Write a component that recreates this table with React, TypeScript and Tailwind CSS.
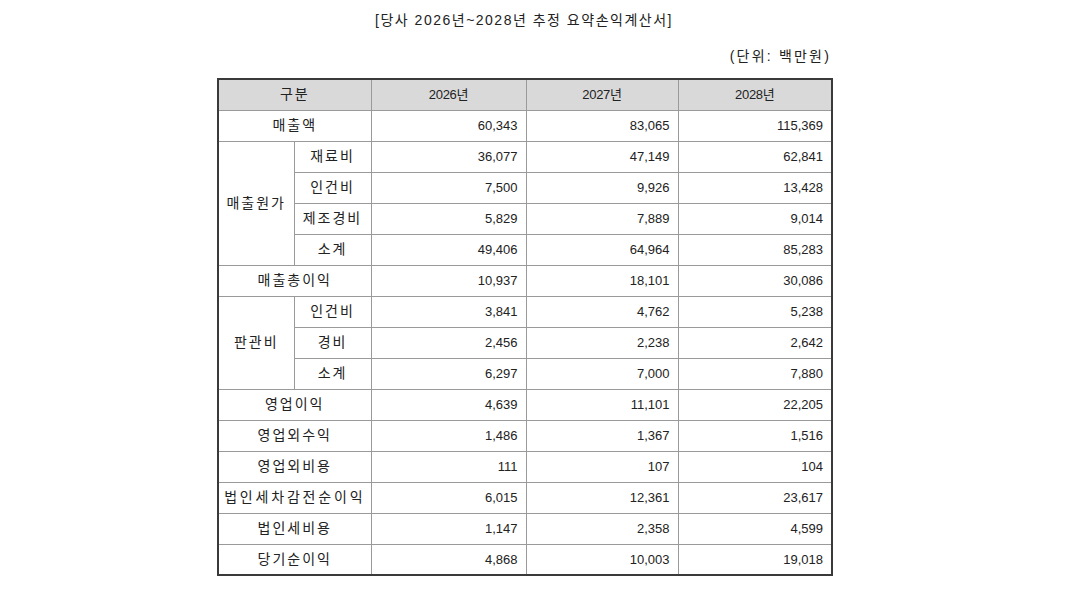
const font = { fontFamily: '"Liberation Sans", "Noto Sans CJK KR", sans-serif' };

type Row = { label: string; values: string[]; group?: string; span?: number; sub?: boolean };

const rows: Row[] = [
  { label: "매출액", values: ["60,343", "83,065", "115,369"] },
  { group: "매출원가", span: 4, label: "재료비", values: ["36,077", "47,149", "62,841"], sub: true },
  { label: "인건비", values: ["7,500", "9,926", "13,428"], sub: true },
  { label: "제조경비", values: ["5,829", "7,889", "9,014"], sub: true },
  { label: "소계", values: ["49,406", "64,964", "85,283"], sub: true },
  { label: "매출총이익", values: ["10,937", "18,101", "30,086"] },
  { group: "판관비", span: 3, label: "인건비", values: ["3,841", "4,762", "5,238"], sub: true },
  { label: "경비", values: ["2,456", "2,238", "2,642"], sub: true },
  { label: "소계", values: ["6,297", "7,000", "7,880"], sub: true },
  { label: "영업이익", values: ["4,639", "11,101", "22,205"] },
  { label: "영업외수익", values: ["1,486", "1,367", "1,516"] },
  { label: "영업외비용", values: ["111", "107", "104"] },
  { label: "법인세차감전순이익", values: ["6,015", "12,361", "23,617"] },
  { label: "법인세비용", values: ["1,147", "2,358", "4,599"] },
  { label: "당기순이익", values: ["4,868", "10,003", "19,018"] },
];

const cell = "border border-[#9a9a9a] p-0";

export default function App() {
  return (
    <div className="min-h-screen w-full bg-white text-[#222]" style={font}>
      <div className="ml-[217px] w-[614px] pt-[11px]">
        <h1 className="text-center text-[14px] leading-[18px] tracking-[1.5px]">
          [당사 2026년~2028년 추정 요약손익계산서]
        </h1>
        <p className="mt-[18px] text-right text-[14px] leading-[18px] tracking-[2.2px]">(단위: 백만원)</p>
        <table className="mt-[13px] w-[614px] table-fixed border-collapse border-2 border-[#3a3a3a] text-[13px]">
          <colgroup>
            <col className="w-[76px]" />
            <col className="w-[77px]" />
            <col className="w-[155px]" />
            <col className="w-[152px]" />
            <col className="w-[154px]" />
          </colgroup>
          <thead>
            <tr className="h-[31px] bg-[#d9d9d9]">
              <th colSpan={2} className={`${cell} text-[14px] font-normal tracking-[2px]`}>구분</th>
              <th className={`${cell} font-normal tracking-[-0.3px]`}>2026년</th>
              <th className={`${cell} font-normal tracking-[-0.3px]`}>2027년</th>
              <th className={`${cell} font-normal tracking-[-0.3px]`}>2028년</th>
            </tr>
          </thead>
          <tbody>
            {rows.map((r, i) => (
              <tr key={i} className="h-[31px]">
                {r.group && (
                  <td rowSpan={r.span} className={`${cell} text-center text-[14px] tracking-[2px]`}>
                    {r.group}
                  </td>
                )}
                <td
                  colSpan={r.sub ? 1 : 2}
                  className={`${cell} whitespace-nowrap text-center text-[14px] ${
                    r.label.length > 6 ? "tracking-[2.8px]" : "tracking-[2px]"
                  }`}
                >
                  {r.label}
                </td>
                {r.values.map((v, j) => (
                  <td key={j} className={`${cell} pr-[8px] text-right`}>
                    {v}
                  </td>
                ))}
              </tr>
            ))}
          </tbody>
        </table>
      </div>
    </div>
  );
}
